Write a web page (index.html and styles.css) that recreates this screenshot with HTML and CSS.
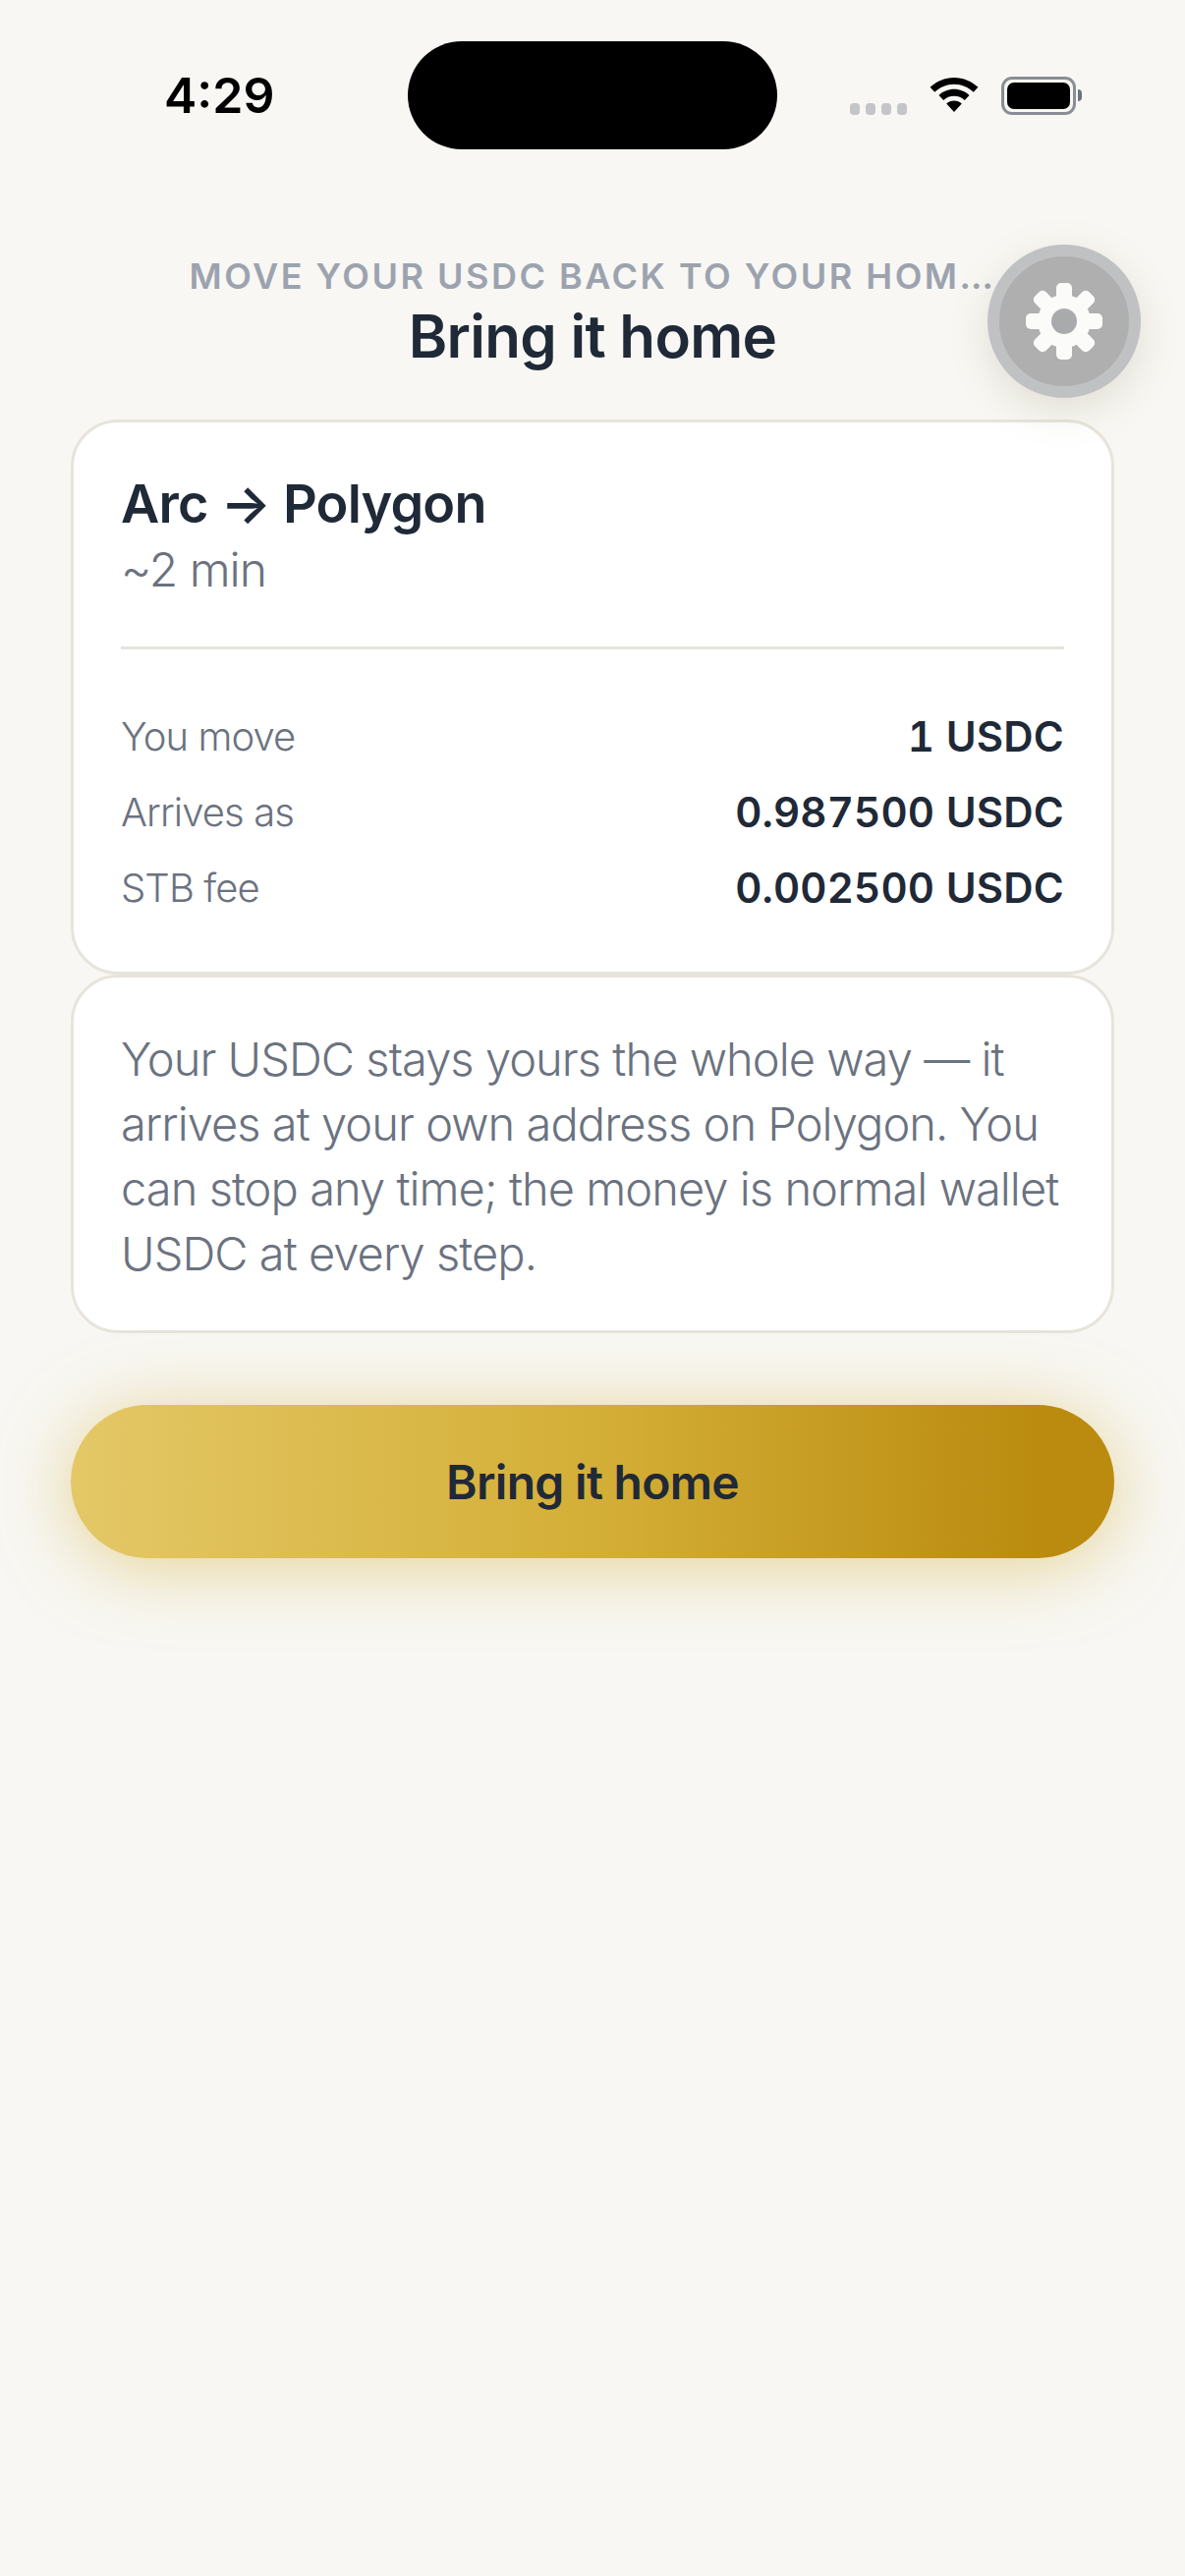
FILE: index.html
```html
<!DOCTYPE html>
<html lang="en">
<head>
<meta charset="utf-8">
<title>Bring it home</title>
<link rel="stylesheet" href="styles.css">
</head>
<body>
<div class="screen">
  <div class="status">
    <span class="time">4:29</span>
    <div class="island"></div>
    <div class="status-icons">
      <div class="dots"><i></i><i></i><i></i><i></i></div>
      <svg class="wifi" width="50" height="36" viewBox="0 0 50 36"><path d="M25 0C15.500 0 7 3.800 .6 9.800l4.700 5C10.500 10 17.400 6.800 25 6.800s14.500 3.200 19.700 8l4.700-5C43 3.800 34.500 0 25 0zM25 11.800c-6 0-11.400 2.300-15.500 6.100l4.700 5c2.800-2.600 6.600-4.200 10.800-4.200s8 1.600 10.800 4.200l4.700-5C36.400 14.100 31 11.800 25 11.800zM25 23.500c-3 0-5.700 1.100-7.800 3L25 35l7.800-8.500c-2.100-1.900-4.800-3-7.800-3z"/></svg>
      <div class="battery"><div class="battery-body"><div class="battery-fill"></div></div><div class="battery-cap"></div></div>
    </div>
  </div>
  <header class="head">
    <div class="eyebrow">MOVE YOUR USDC BACK TO YOUR HOM…</div>
    <h1 class="title">Bring it home</h1>
  </header>
  <button class="gear" type="button" aria-label="Settings">
    <svg width="78" height="78" viewBox="-39 -39 78 78">
      <g fill="#fbfbfa">
        <circle r="27"/>
        <rect x="-8" y="-39" width="16" height="24" rx="5"/>
        <rect x="-8" y="-39" width="16" height="24" rx="5" transform="rotate(45)"/>
        <rect x="-8" y="-39" width="16" height="24" rx="5" transform="rotate(90)"/>
        <rect x="-8" y="-39" width="16" height="24" rx="5" transform="rotate(135)"/>
        <rect x="-8" y="-39" width="16" height="24" rx="5" transform="rotate(180)"/>
        <rect x="-8" y="-39" width="16" height="24" rx="5" transform="rotate(225)"/>
        <rect x="-8" y="-39" width="16" height="24" rx="5" transform="rotate(270)"/>
        <rect x="-8" y="-39" width="16" height="24" rx="5" transform="rotate(315)"/>
      </g>
      <circle r="13" fill="#a9aaac"/>
    </svg>
  </button>
  <main class="content">
    <section class="card route">
      <div class="route-name">Arc → Polygon</div>
      <div class="route-time">~2 min</div>
      <div class="divider"></div>
      <div class="row"><span class="label">You move</span><span class="value">1 USDC</span></div>
      <div class="row"><span class="label">Arrives as</span><span class="value">0.987500 USDC</span></div>
      <div class="row"><span class="label">STB fee</span><span class="value">0.002500 USDC</span></div>
    </section>
    <section class="card note">Your USDC stays yours the whole way — it arrives at your own address on Polygon. You can stop any time; the money is normal wallet USDC at every step.</section>
    <button class="cta" type="button">Bring it home</button>
  </main>
</div>
</body>
</html>
```

FILE: styles.css
```css
* { box-sizing: border-box; }
html, body { margin: 0; padding: 0; }
body {
  width: 1206px;
  height: 2622px;
  overflow: hidden;
  background: #f8f7f3;
  font-family: "Inter", "Liberation Sans", sans-serif;
}
.screen { position: relative; width: 1206px; height: 2622px; }
.status {
  display: flex;
  align-items: flex-start;
  height: 152px;
  padding: 42px 0 0 167px;
}
.time {
  width: 248px;
  margin-top: 24px;
  font: 600 50px/62px "Inter", "Liberation Sans", sans-serif;
  color: #000;
}
.island {
  width: 376px;
  height: 110px;
  border-radius: 55px;
  background: #000;
}
.status-icons {
  display: flex;
  align-items: center;
  margin: 35px 0 0 74px;
}
.dots { display: flex; gap: 6px; margin-top: 28px; width: 58px; }
.dots i { width: 10px; height: 12px; border-radius: 4px; background: #c4c5c7; flex: none; }
.wifi { margin-left: 23px; }
.battery { display: flex; align-items: center; margin-left: 23px; }
.battery-body {
  width: 76px;
  height: 39px;
  border: 3px solid #8a8d96;
  border-radius: 11px;
  padding: 3px;
}
.battery-fill { width: 100%; height: 100%; background: #000; border-radius: 7px; }
.battery-cap { width: 4px; height: 12px; background: #6d7280; border-radius: 0 4px 4px 0; margin-left: 2px; }
.head { text-align: center; height: 275px; padding-top: 107px; }
.eyebrow {
  font-size: 36px;
  line-height: 44px;
  font-weight: 600;
  letter-spacing: 2.5px;
  color: #9ca3af;
  white-space: nowrap;
}
.title {
  margin: 3px 0 0;
  font-size: 60px;
  line-height: 72px;
  font-weight: 600;
  letter-spacing: -.7px;
  color: #1f2937;
}
.gear {
  position: absolute;
  left: 1005px;
  top: 249px;
  width: 156px;
  height: 156px;
  border: 12px solid #c0c1c3;
  border-radius: 50%;
  background: #afafaf;
  box-shadow: 0 12px 40px rgba(120, 110, 70, .18);
  padding: 0;
  display: flex;
  align-items: center;
  justify-content: center;
}
.content { width: 1062px; margin-left: 72px; display: flex; flex-direction: column; }
.card {
  background: #fff;
  border: 3px solid #e7e4dc;
  border-radius: 48px;
}
.route { height: 565px; padding: 50px 48px 0; }
.route-name { font-size: 54px; line-height: 66px; font-weight: 600; letter-spacing: -.8px; color: #1f2937; }
.route-time { font-size: 48px; line-height: 68px; font-weight: 300; letter-spacing: -1px; color: #6b7280; }
.divider { height: 3px; background: #e7e4dc; margin: 44px 0 50px; }
.row { display: flex; justify-content: space-between; align-items: center; height: 77px; }
.label { font-size: 40px; font-weight: 300; letter-spacing: -.9px; color: #6b7280; }
.value { font-size: 42px; font-weight: 600; font-feature-settings: "tnum"; letter-spacing: .2px; color: #1f2937; }
.note {
  height: 365px;
  padding: 50px 40px 0 48px;
  font-size: 47px;
  line-height: 66px;
  font-weight: 300;
  letter-spacing: -.95px;
  color: #6b7280;
}
.cta {
  margin-top: 73px;
  height: 156px;
  border: 0;
  border-radius: 78px;
  background: linear-gradient(90deg, #e4c867 0%, #d4af37 50%, #ba8b0f 93%, #ba8b0f 100%);
  box-shadow: 0 8px 72px rgba(212, 175, 55, .5);
  font: 600 48px/1 "Inter", "Liberation Sans", sans-serif;
  letter-spacing: -.7px;
  color: #1f2937;
  padding-top: 3px;
}
```
